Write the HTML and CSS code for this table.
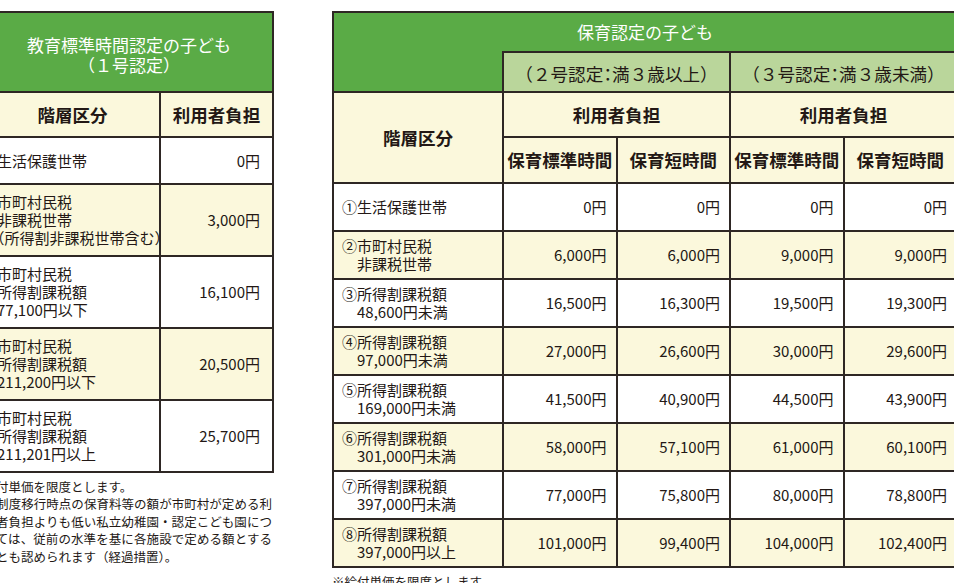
FILE: index.html
```html
<!DOCTYPE html>
<html lang="ja">
<head>
<meta charset="utf-8">
<title>利用者負担</title>
<link rel="stylesheet" href="styles.css">
</head>
<body>
<div class="page">
  <section class="block block-left">
    <table class="fee fee-left">
      <colgroup><col class="c-label-l"><col class="c-val-l"></colgroup>
      <thead>
        <tr class="h-80"><th colspan="2" class="title title-two">教育標準時間認定の子ども<br>（１号認定）</th></tr>
        <tr class="h-45"><th class="head">階層区分</th><th class="head">利用者負担</th></tr>
      </thead>
      <tbody>
        <tr class="h-47 odd"><td class="label">生活保護世帯</td><td class="val">0円</td></tr>
        <tr class="h-72 even"><td class="label">市町村民税<br>非課税世帯<br><span class="halt">（</span>所得割非課税世帯含む）</td><td class="val">3,000円</td></tr>
        <tr class="h-72 odd"><td class="label">市町村民税<br>所得割課税額<br>77,100円以下</td><td class="val">16,100円</td></tr>
        <tr class="h-72 even"><td class="label">市町村民税<br>所得割課税額<br>211,200円以下</td><td class="val">20,500円</td></tr>
        <tr class="h-72 odd"><td class="label">市町村民税<br>所得割課税額<br>211,201円以上</td><td class="val">25,700円</td></tr>
      </tbody>
    </table>
    <div class="notes">
      <p>※給付単価を限度とします。</p>
      <p>※新制度移行時点の保育料等の額が市町村が定める利用者負担よりも低い私立幼稚園・認定こども園については、従前の水準を基に各施設で定める額とすることも認められます（経過措置）。</p>
    </div>
  </section>

  <section class="block block-right">
    <table class="fee fee-right">
      <colgroup><col class="c-label-r"><col class="c-val-r"><col class="c-val-r"><col class="c-val-r"><col class="c-val-r"></colgroup>
      <thead>
        <tr class="h-40"><th colspan="5" class="title">保育認定の子ども</th></tr>
        <tr class="h-40"><th class="title title-fill"></th><th colspan="2" class="sub">（２号認定<span class="halt">：</span>満３歳以上）</th><th colspan="2" class="sub">（３号認定<span class="halt">：</span>満３歳未満）</th></tr>
        <tr class="h-45"><th rowspan="2" class="head">階層区分</th><th colspan="2" class="head">利用者負担</th><th colspan="2" class="head">利用者負担</th></tr>
        <tr class="h-46"><th class="head">保育標準時間</th><th class="head">保育短時間</th><th class="head">保育標準時間</th><th class="head">保育短時間</th></tr>
      </thead>
      <tbody>
        <tr class="h-48 odd"><td class="label">①生活保護世帯</td><td class="val">0円</td><td class="val">0円</td><td class="val">0円</td><td class="val">0円</td></tr>
        <tr class="h-48 even"><td class="label">②市町村民税<br><span class="ind">非課税世帯</span></td><td class="val">6,000円</td><td class="val">6,000円</td><td class="val">9,000円</td><td class="val">9,000円</td></tr>
        <tr class="h-48 odd"><td class="label">③所得割課税額<br><span class="ind">48,600円未満</span></td><td class="val">16,500円</td><td class="val">16,300円</td><td class="val">19,500円</td><td class="val">19,300円</td></tr>
        <tr class="h-48 even"><td class="label">④所得割課税額<br><span class="ind">97,000円未満</span></td><td class="val">27,000円</td><td class="val">26,600円</td><td class="val">30,000円</td><td class="val">29,600円</td></tr>
        <tr class="h-48 odd"><td class="label">⑤所得割課税額<br><span class="ind">169,000円未満</span></td><td class="val">41,500円</td><td class="val">40,900円</td><td class="val">44,500円</td><td class="val">43,900円</td></tr>
        <tr class="h-48 even"><td class="label">⑥所得割課税額<br><span class="ind">301,000円未満</span></td><td class="val">58,000円</td><td class="val">57,100円</td><td class="val">61,000円</td><td class="val">60,100円</td></tr>
        <tr class="h-48 odd"><td class="label">⑦所得割課税額<br><span class="ind">397,000円未満</span></td><td class="val">77,000円</td><td class="val">75,800円</td><td class="val">80,000円</td><td class="val">78,800円</td></tr>
        <tr class="h-48 even"><td class="label">⑧所得割課税額<br><span class="ind">397,000円以上</span></td><td class="val">101,000円</td><td class="val">99,400円</td><td class="val">104,000円</td><td class="val">102,400円</td></tr>
      </tbody>
    </table>
    <p class="note-right">※給付単価を限度とします。</p>
  </section>
</div>
</body>
</html>
```

FILE: styles.css
```css
* { box-sizing: border-box; }

html, body {
  margin: 0;
  padding: 0;
  background: #ffffff;
}

body {
  font-family: "Noto Sans CJK JP", "Noto Sans", sans-serif;
  color: #231815;
}

.page {
  width: 954px;
  height: 583px;
  overflow: hidden;
  display: flex;
  align-items: flex-start;
  padding-top: 11px;
}

.block { flex: none; }

.block-left {
  width: 301px;
  margin-left: -29px;
}

.block-right {
  width: 626px;
  margin-left: 60px;
}

/* tables */
.fee {
  border-collapse: collapse;
  table-layout: fixed;
}

.fee th,
.fee td {
  border: 2px solid #2e2724;
  padding: 0;
}

.fee-left {
  width: 290px;
  margin-left: 13px;
}

.c-label-l { width: 175px; }
.c-val-l { width: 113px; }

.fee-right { width: 626px; }
.c-label-r { width: 170px; }
.c-val-r { width: 113.5px; }

.h-40 { height: 40px; }
.h-45 { height: 45px; }
.h-46 { height: 46px; }
.h-47 { height: 47px; }
.h-48 { height: 48px; }
.h-72 { height: 72px; }
.h-80 { height: 80px; }

.fee .title {
  background: #5aab46;
  color: #ffffff;
  font-weight: 400;
  font-size: 17px;
  line-height: 20px;
  text-align: center;
  vertical-align: middle;
}

.fee .title-two { padding-top: 5px; }

.fee .title-fill { border-top-style: hidden; }

.fee .sub {
  background: #bad69b;
  font-weight: 400;
  font-size: 17.6px;
  line-height: 20px;
  text-align: center;
  vertical-align: middle;
  padding-top: 4px;
}

.fee .head {
  background: #fbf8dc;
  font-weight: 700;
  font-size: 17.5px;
  line-height: 20px;
  text-align: center;
  vertical-align: middle;
  white-space: nowrap;
}

.fee .odd td { background: #ffffff; }
.fee .even td { background: #fbf8dc; }

.fee .label {
  font-size: 15px;
  line-height: 18px;
  text-align: left;
  vertical-align: middle;
  white-space: nowrap;
  padding-left: 8px;
}

.fee-left .label { padding-left: 11px; }

.ind {
  display: inline-block;
  padding-left: 1em;
}

.fee .val {
  font-size: 15px;
  line-height: 18px;
  text-align: right;
  vertical-align: middle;
  padding-right: 9px;
  white-space: nowrap;
}

.fee-left .val { padding-right: 12px; }

.halt { font-feature-settings: "halt" 1; }

/* notes */
.notes {
  margin-top: 5px;
  width: 301px;
  font-size: 12.5px;
  line-height: 17.4px;
}

.notes p {
  margin: 0;
  padding-left: 1em;
  text-indent: -1em;
  text-align: justify;
}

.note-right {
  margin: 5px 0 0;
  font-size: 12.5px;
  line-height: 18px;
}
```
